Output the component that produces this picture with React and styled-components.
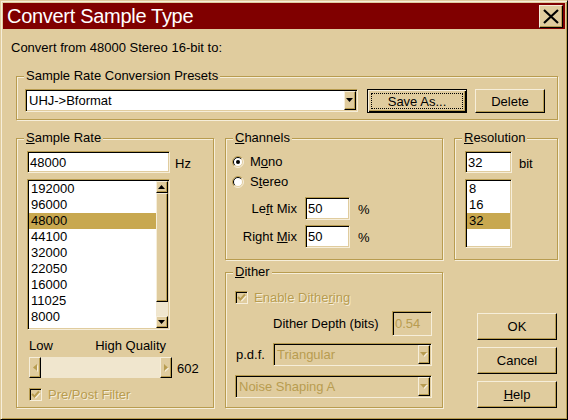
import React from 'react';
import styled, { createGlobalStyle, css } from 'styled-components';

const c = {
  face: '#E0CC9E',
  hl: '#F6EEDA',
  sh: '#B89C50',
  dk: '#000000',
  sel: '#C8A850',
  title: '#800000',
  track: '#F0E6CE',
};

const rates = ['192000', '96000', '48000', '44100', '32000', '22050', '16000', '11025', '8000', '6000'];
const depths = ['8', '16', '32'];

const GlobalStyle = createGlobalStyle`
  html, body { margin: 0; padding: 0; background: ${c.face}; }
  body {
    font-family: "Liberation Sans", Arial, sans-serif;
    font-size: 13px;
    color: #000;
  }
  * { box-sizing: border-box; }
`;

const sunken = css`
  border: 1px solid;
  border-color: ${c.sh} ${c.hl} ${c.hl} ${c.sh};
  box-shadow: inset 1px 1px 0 ${c.dk}, inset -1px -1px 0 ${c.face};
`;

const raised = css`
  border: 1px solid;
  border-color: ${c.hl} ${c.dk} ${c.dk} ${c.hl};
  box-shadow: inset -1px -1px 0 ${c.sh}, inset 1px 1px 0 ${c.face};
`;

const disabledText = css`
  color: ${c.sh};
  text-shadow: 1px 1px 0 ${c.hl};
`;

export default function App() {
  return (
    <>
      <GlobalStyle />
      <Window>
        <TitleBar>
          <TitleText>Convert Sample Type</TitleText>
          <CloseButton>
            <svg width="16" height="15" viewBox="0 0 16 15">
              <path d="M1 1 L15 14 M15 1 L1 14" stroke="#000" strokeWidth="2.2" />
            </svg>
          </CloseButton>
        </TitleBar>

        <Body>
          <Intro>Convert from 48000 Stereo 16-bit to:</Intro>

          <Group>
            <Legend>Sample Rate Conversion Presets</Legend>
            <GroupBody $pad="6px 0 6px 8px">
              <PresetRow>
                <ComboBox value="UHJ->Bformat" width={333} />
                <DefaultButton $w={100} $h={24}>Save As...</DefaultButton>
                <Button $w={70} $h={24}>Delete</Button>
              </PresetRow>
            </GroupBody>
          </Group>

          <Columns>
            <Group>
              <Legend><u>S</u>ample Rate</Legend>
              <GroupBody $pad="6px 0 0 10px">
                <FieldRow>
                  <TextField $w={143}>48000</TextField>
                  <Unit $gap={5}>Hz</Unit>
                </FieldRow>
                <ListBox $w={143} $h={151} $mt={6}>
                  <Items>
                    {rates.map((r) => (
                      <Item key={r} $selected={r === '48000'}>{r}</Item>
                    ))}
                  </Items>
                  <VScroll>
                    <ScrollButton><Arrow dir="up" /></ScrollButton>
                    <Thumb />
                    <Track />
                    <ScrollButton><Arrow dir="down" /></ScrollButton>
                  </VScroll>
                </ListBox>
                <QualityLabels>
                  <span>Low</span>
                  <span>High Quality</span>
                </QualityLabels>
                <SliderRow>
                  <HSlider>
                    <SliderButton><Arrow dir="left" disabled /></SliderButton>
                    <SliderButton><Arrow dir="right" disabled /></SliderButton>
                  </HSlider>
                  <Unit $gap={5}>602</Unit>
                </SliderRow>
                <CheckRow $mt={9} $pl={2}>
                  <CheckBox disabled />
                  <CheckLabel $disabled>Pre/Post Filter</CheckLabel>
                </CheckRow>
              </GroupBody>
            </Group>

            <Stack>
              <Group $h={122}>
                <Legend><u>C</u>hannels</Legend>
                <GroupBody $pad="0 0 0 6px">
                  <RadioRow $mt={9}>
                    <Radio on />
                    <span>M<u>o</u>no</span>
                  </RadioRow>
                  <RadioRow $mt={5}>
                    <Radio />
                    <span>S<u>t</u>ereo</span>
                  </RadioRow>
                  <MixRow $mt={8}>
                    <MixLabel>Le<u>f</u>t Mix</MixLabel>
                    <TextField $w={45} $h={23}>50</TextField>
                    <Unit $gap={8}>%</Unit>
                  </MixRow>
                  <MixRow $mt={5}>
                    <MixLabel>Right <u>M</u>ix</MixLabel>
                    <TextField $w={45} $h={23}>50</TextField>
                    <Unit $gap={8}>%</Unit>
                  </MixRow>
                </GroupBody>
              </Group>

              <Group $h={136}>
                <Legend><u>D</u>ither</Legend>
                <GroupBody $pad="0 10px 0 9px">
                  <CheckRow $mt={11}>
                    <CheckBox disabled />
                    <CheckLabel $disabled>Enable Dithe<u>r</u>ing</CheckLabel>
                  </CheckRow>
                  <DepthRow>
                    <span>Dither Depth (bits)</span>
                    <TextField $w={40} $h={25} $disabled>0.54</TextField>
                  </DepthRow>
                  <PdfRow>
                    <PdfLabel>p.d.f.</PdfLabel>
                    <ComboBox value="Triangular" width={159} disabled />
                  </PdfRow>
                  <NoiseRow>
                    <ComboBox value="Noise Shaping A" width={197} disabled />
                  </NoiseRow>
                </GroupBody>
              </Group>
            </Stack>

            <Stack>
              <Group $h={122}>
                <Legend><u>R</u>esolution</Legend>
                <GroupBody $pad="6px 0 0 10px">
                  <FieldRow>
                    <TextField $w={47}>32</TextField>
                    <Unit $gap={7}>bit</Unit>
                  </FieldRow>
                  <ListBox $w={47} $h={69} $mt={6}>
                    <Items>
                      {depths.map((d) => (
                        <Item key={d} $selected={d === '32'}>{d}</Item>
                      ))}
                    </Items>
                  </ListBox>
                </GroupBody>
              </Group>
              <ButtonStack>
                <Button $w={80} $h={27}>OK</Button>
                <Button $w={80} $h={27}>Cancel</Button>
                <Button $w={80} $h={27}><u>H</u>elp</Button>
              </ButtonStack>
            </Stack>
          </Columns>
        </Body>
      </Window>
    </>
  );
}

function ComboBox({ value, width, disabled }) {
  return (
    <Combo $w={width} $disabled={disabled}>
      <ComboText $disabled={disabled}>{value}</ComboText>
      <DropButton><Arrow dir="down" disabled={disabled} /></DropButton>
    </Combo>
  );
}

function Arrow({ dir, disabled }) {
  const shapes = {
    up: { w: 7, h: 4, pts: '0,4 7,4 3.5,0' },
    down: { w: 7, h: 4, pts: '0,0 7,0 3.5,4' },
    left: { w: 4, h: 7, pts: '4,0 4,7 0,3.5' },
    right: { w: 4, h: 7, pts: '0,0 0,7 4,3.5' },
  };
  const s = shapes[dir];
  return (
    <svg width={s.w + 1} height={s.h + 1} viewBox={`0 0 ${s.w + 1} ${s.h + 1}`}>
      {disabled && <polygon points={s.pts} fill={c.hl} transform="translate(1 1)" />}
      <polygon points={s.pts} fill={disabled ? c.sh : '#000'} />
    </svg>
  );
}

function Radio({ on }) {
  return (
    <svg width="12" height="12" viewBox="0 0 12 12">
      <circle cx="6" cy="6" r="5" fill="#fff" />
      <path d="M2.1 9.9 A5.5 5.5 0 0 1 9.9 2.1" stroke={c.sh} fill="none" />
      <path d="M9.9 2.1 A5.5 5.5 0 0 1 2.1 9.9" stroke={c.hl} fill="none" />
      <path d="M2.8 9.2 A4.5 4.5 0 0 1 9.2 2.8" stroke="#000" fill="none" />
      <path d="M9.2 2.8 A4.5 4.5 0 0 1 2.8 9.2" stroke={c.face} fill="none" />
      {on && <circle cx="6" cy="6" r="2" fill="#000" />}
    </svg>
  );
}

function CheckBox({ disabled }) {
  return (
    <Box $disabled={disabled}>
      <svg width="11" height="11" viewBox="0 0 11 11">
        {disabled && <path d="M3 5.5 L5 7.5 L9 3" stroke={c.hl} strokeWidth="2" fill="none" transform="translate(0.8 0.8)" />}
        <path d="M2 5 L4.5 7.5 L9 2.5" stroke={disabled ? c.sh : '#000'} strokeWidth="2" fill="none" />
      </svg>
    </Box>
  );
}

const Window = styled.div`
  width: 568px;
  height: 420px;
  display: flex;
  flex-direction: column;
  background: ${c.face};
  border: 1px solid;
  border-color: ${c.face} ${c.dk} ${c.dk} ${c.face};
  box-shadow: inset 1px 1px 0 ${c.hl}, inset -1px -1px 0 ${c.sh};
  padding: 2px;
`;

const TitleBar = styled.div`
  height: 26px;
  display: flex;
  align-items: center;
  justify-content: space-between;
  background: ${c.title};
  padding: 0 2px 0 4px;
`;

const TitleText = styled.span`
  color: #fff;
  font-size: 20px;
  letter-spacing: -0.3px;
`;

const CloseButton = styled.div`
  ${raised};
  width: 24px;
  height: 23px;
  display: flex;
  align-items: center;
  justify-content: center;
  background: ${c.face};
`;

const Body = styled.div`
  flex: 1;
  display: flex;
  flex-direction: column;
  padding: 11px 7px 0 13px;
`;

const Intro = styled.div`
  margin-left: -5px;
  line-height: 15px;
  margin-bottom: 21px;
`;

const Group = styled.div`
  display: flex;
  flex-direction: column;
  border: 1px solid ${c.sh};
  box-shadow: 1px 1px 0 ${c.hl}, inset 1px 1px 0 ${c.hl};
  ${(p) => p.$h && `height: ${p.$h}px;`}
`;

const Legend = styled.span`
  align-self: flex-start;
  margin: -9px 0 0 7px;
  padding: 0 2px;
  background: ${c.face};
  line-height: 15px;
  white-space: nowrap;
`;

const GroupBody = styled.div`
  display: flex;
  flex-direction: column;
  padding: ${(p) => p.$pad};
`;

const PresetRow = styled.div`
  display: flex;
  align-items: flex-start;
  gap: 9px;

  & > :last-child { margin-left: -1px; }
`;

const Combo = styled.div`
  ${sunken};
  width: ${(p) => p.$w}px;
  height: 23px;
  padding: 1px;
  display: flex;
  align-items: stretch;
  background: ${(p) => (p.$disabled ? c.face : '#fff')};
`;

const ComboText = styled.span`
  flex: 1;
  display: flex;
  align-items: center;
  padding-left: 2px;
  color: ${(p) => (p.$disabled ? c.sh : '#000')};
  white-space: nowrap;
  overflow: hidden;
`;

const DropButton = styled.span`
  ${raised};
  width: 12px;
  display: flex;
  align-items: center;
  justify-content: center;
  background: ${c.face};
`;

const Button = styled.div`
  ${raised};
  width: ${(p) => p.$w}px;
  height: ${(p) => p.$h}px;
  display: flex;
  align-items: center;
  justify-content: center;
  background: ${c.face};
`;

const DefaultButton = styled(Button)`
  position: relative;
  border: 1px solid ${c.dk};
  box-shadow: inset 1px 1px 0 ${c.hl}, inset -1px -1px 0 ${c.dk}, inset -2px -2px 0 ${c.sh};

  &::after {
    content: '';
    position: absolute;
    inset: 3px;
    border: 1px dotted #000;
  }
`;

const Columns = styled.div`
  display: grid;
  grid-template-columns: 198px 218px 1fr;
  column-gap: 11px;
  margin-top: 18px;
`;

const Stack = styled.div`
  display: flex;
  flex-direction: column;
  gap: 12px;
`;

const FieldRow = styled.div`
  display: flex;
  align-items: center;
`;

const TextField = styled.div`
  ${sunken};
  width: ${(p) => p.$w}px;
  height: ${(p) => p.$h || 22}px;
  display: flex;
  align-items: center;
  padding: 0 2px;
  background: ${(p) => (p.$disabled ? c.face : '#fff')};
  color: ${(p) => (p.$disabled ? c.sh : '#000')};
`;

const Unit = styled.span`
  margin-left: ${(p) => p.$gap}px;
  padding-top: 2px;
`;

const ListBox = styled.div`
  ${sunken};
  width: ${(p) => p.$w}px;
  height: ${(p) => p.$h}px;
  margin-top: ${(p) => p.$mt}px;
  padding: 1px;
  display: flex;
  background: #fff;
  overflow: hidden;
`;

const Items = styled.div`
  flex: 1;
  overflow: hidden;
`;

const Item = styled.div`
  height: 16px;
  line-height: 16px;
  padding-left: 2px;
  background: ${(p) => (p.$selected ? c.sel : 'transparent')};
`;

const VScroll = styled.div`
  width: 12px;
  display: flex;
  flex-direction: column;
  background: ${c.track};
`;

const ScrollButton = styled.div`
  ${raised};
  height: 12px;
  display: flex;
  align-items: center;
  justify-content: center;
  background: ${c.face};
`;

const Thumb = styled.div`
  ${raised};
  height: 109px;
  background: ${c.face};
`;

const Track = styled.div`
  flex: 1;
`;

const QualityLabels = styled.div`
  width: 139px;
  margin-top: 8px;
  padding-left: 2px;
  display: flex;
  justify-content: space-between;
  line-height: 15px;
`;

const SliderRow = styled.div`
  display: flex;
  align-items: center;
  margin-top: 4px;
  padding-left: 2px;
`;

const HSlider = styled.div`
  width: 143px;
  height: 21px;
  display: flex;
  justify-content: space-between;
  background: ${c.track};
`;

const SliderButton = styled.div`
  ${raised};
  width: 12px;
  display: flex;
  align-items: center;
  justify-content: center;
  background: ${c.face};
`;

const CheckRow = styled.div`
  display: flex;
  align-items: center;
  gap: 6px;
  height: 15px;
  margin-top: ${(p) => p.$mt}px;
  padding-left: ${(p) => p.$pl || 0}px;
`;

const Box = styled.span`
  ${sunken};
  width: 13px;
  height: 13px;
  display: flex;
  align-items: center;
  justify-content: center;
  background: ${(p) => (p.$disabled ? c.face : '#fff')};
`;

const CheckLabel = styled.span`
  ${(p) => p.$disabled && disabledText};
`;

const RadioRow = styled.div`
  display: flex;
  align-items: center;
  gap: 6px;
  height: 15px;
  margin-top: ${(p) => p.$mt}px;
`;

const MixRow = styled.div`
  display: flex;
  align-items: center;
  margin-top: ${(p) => p.$mt}px;
`;

const MixLabel = styled.span`
  width: 65px;
  margin-right: 8px;
  text-align: right;
`;

const DepthRow = styled.div`
  display: flex;
  align-items: center;
  justify-content: space-between;
  margin-top: 6px;
  padding-left: 38px;
`;

const PdfRow = styled.div`
  display: flex;
  align-items: center;
  margin-top: 7px;
`;

const PdfLabel = styled.span`
  width: 38px;
  padding-left: 1px;
`;

const NoiseRow = styled.div`
  margin-top: 9px;
`;

const ButtonStack = styled.div`
  margin-top: auto;
  display: flex;
  flex-direction: column;
  align-items: flex-end;
  gap: 7px;
  padding-right: 1px;
`;
